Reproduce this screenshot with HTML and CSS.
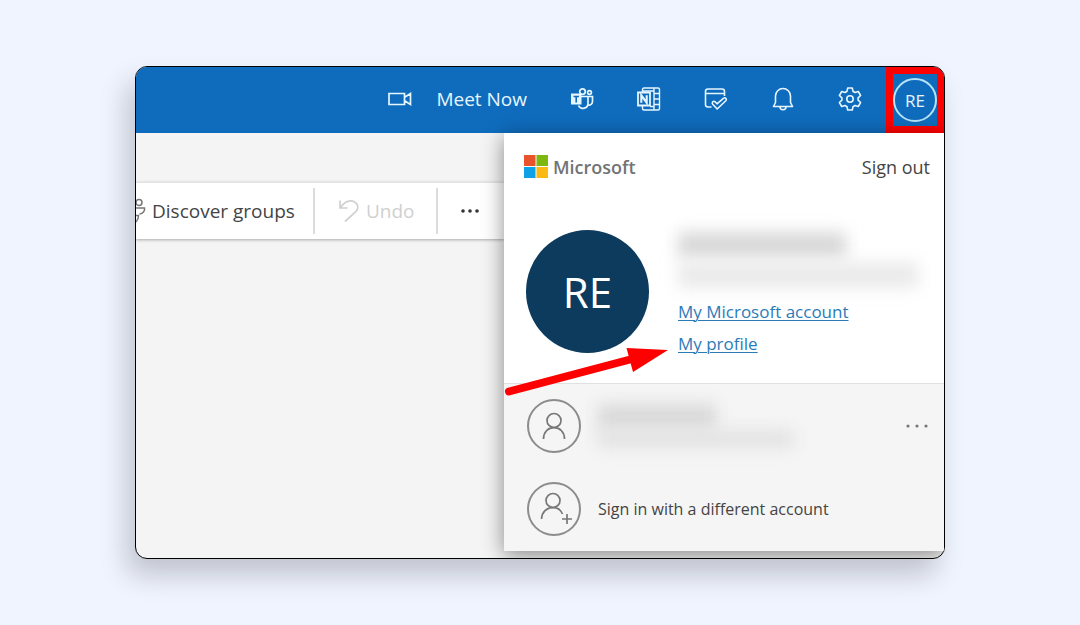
FILE: index.html
```html
<!DOCTYPE html>
<html lang="en">
<head>
	<meta charset="utf-8">
	<meta name="viewport" content="width=device-width, initial-scale=1">
	<title>Outlook - My profile</title>
	<link rel="stylesheet" href="styles.css">
</head>
<body>

	<div class="window">
		<header class="topbar">
			<button class="meet">
				<svg width="24" height="14" viewBox="0 0 24 14" fill="none" stroke="currentColor" stroke-width="1.7">
					<path d="M1 1.500h15.500v11H1zM17 5l5.500-3.500v11L17 9"/>
				</svg>
				Meet Now
			</button>
			<button class="icon-btn" aria-label="Teams">
				<svg width="24" height="24" viewBox="0 0 24 24" fill="none" stroke="currentColor" stroke-width="1.700">
					<circle cx="12.500" cy="4.600" r="2.800"/>
					<circle cx="19.500" cy="5.500" r="1.900"/>
					<path d="M11 9.500h7v6.500a5 5 0 0 1-9.500 2.500M18 9.500h4.500v5a3.500 3.500 0 0 1-4.500 3.400"/>
					<path d="M1 6.500h10.500v11H1z" fill="currentColor" stroke="none"/>
					<path d="M3.500 9.500H9M6.200 9.500v6" stroke="#0f6cbd" stroke-width="1.600"/>
				</svg>
			</button>
			<button class="icon-btn" aria-label="OneNote">
				<svg width="24" height="24" viewBox="0 0 24 24" fill="none" stroke="currentColor" stroke-width="1.400">
					<path d="M5.500 5V2.500q0-1.500 1.500-1.500h14q1.500 0 1.500 1.500v19q0 1.500-1.500 1.500H7q-1.500 0-1.500-1.500V19M17 1v22M17 6.500h5.500M17 12h5.500M17 17.500h5.500M5.500 4H17M13 19.500h4"/>
					<path d="M1 5.500h12v13H1z" stroke-width="1.800"/>
					<path d="M4.300 15.800V8.300l5.400 7.400V8.300" stroke-width="2.100"/>
				</svg>
			</button>
			<button class="icon-btn" aria-label="My Day">
				<svg width="24" height="24" viewBox="0 0 24 24" fill="none" stroke="currentColor" stroke-width="1.600" stroke-linejoin="round">
					<path d="M7.500 20H4q-2.500 0-2.500-2.500V4.500Q1.500 2 4 2h14q2.500 0 2.500 2.500V9M1.500 6.500h19"/>
					<path d="M8.700 17.200a1.700 1.700 0 0 1 2.400-2.400l1.900 2 6.700-5.700a1.700 1.700 0 0 1 2.300 2.400L13.200 22z"/>
				</svg>
			</button>
			<button class="icon-btn" aria-label="Notifications">
				<svg width="24" height="24" viewBox="0 0 24 24" fill="none" stroke="currentColor" stroke-width="1.600" stroke-linejoin="round">
					<path d="M4.500 9a7.500 7.500 0 0 1 15 0v6.500l2 4h-19l2-4z"/>
					<path d="M9 19.800a3 3 0 0 0 6 0"/>
				</svg>
			</button>
			<button class="icon-btn" aria-label="Settings">
				<svg width="24" height="24" viewBox="0 0 24 24" fill="none" stroke="currentColor" stroke-width="1.600" stroke-linejoin="round">
					<path d="M9.700 1h4.600l.7 3.300 2 1.200 3.300-1 2.300 4-2.500 2.300v2.400l2.500 2.300-2.300 4-3.300-1-2 1.200-.7 3.300H9.700L9 19.700l-2-1.200-3.300 1-2.300-4 2.500-2.300v-2.400L1.400 8.500l2.300-4 3.300 1 2-1.200z"/>
					<circle cx="12" cy="12" r="3.200"/>
				</svg>
			</button>
			<div class="highlight">
				<button class="me">RE</button>
			</div>
		</header>

		<div class="content">
			<main class="mail">
				<div class="toolbar">
					<button class="tool discover">
						<svg width="10" height="26" viewBox="0 0 10 26" fill="none" stroke="#777" stroke-width="1.500">
							<circle cx="3" cy="4.500" r="3"/>
							<path d="M0 10h8.500c.5 3-1.500 5.500-5 6M0 17.500h2.500c0 3-1 5-2.500 6.500"/>
						</svg>
						Discover groups
					</button>
					<button class="tool undo" disabled>
						<svg width="20" height="24" viewBox="0 0 20 24" fill="none" stroke="currentColor" stroke-width="1.700">
							<path d="M1 1.500v7.500h7.500M1.500 8.500C5 3.500 10 .5 15 2.500c4 2 5 6.500 2 10L6 22.500"/>
						</svg>
						Undo
					</button>
					<button class="tool more" aria-label="More options">
						<svg width="20" height="4" viewBox="0 0 20 4" fill="#333">
							<circle cx="3" cy="2" r="1.800"/>
							<circle cx="10" cy="2" r="1.800"/>
							<circle cx="17" cy="2" r="1.800"/>
						</svg>
					</button>
				</div>
			</main>

			<aside class="account">
				<div class="brand-row">
					<svg width="24" height="23" viewBox="0 0 25 24">
						<path d="M0 0h12v11.500H0z" fill="#e8532c"/>
						<path d="M13 0h12v11.500H13z" fill="#7db810"/>
						<path d="M0 12.500h12V24H0z" fill="#0fa1e6"/>
						<path d="M13 12.500h12V24H13z" fill="#fbb914"/>
					</svg>
					<span class="brand">Microsoft</span>
					<a class="sign-out" href="#">Sign out</a>
				</div>
				<div class="profile">
					<div class="avatar">RE</div>
					<div class="details">
						<div class="hidden-name"></div>
						<div class="hidden-mail"></div>
						<a href="#">My Microsoft account</a>
						<a href="#">My profile</a>
					</div>
				</div>
				<div class="others">
					<div class="other">
						<span class="person">
							<svg width="28" height="28" viewBox="0 0 28 28" fill="none" stroke="#777" stroke-width="1.700">
								<circle cx="14" cy="8.500" r="7"/>
								<path d="M3.500 27c0-7 4.500-11.300 10.500-11.300S24.500 20 24.500 27"/>
							</svg>
						</span>
						<div class="hidden-user">
							<div class="hidden-line"></div>
							<div class="hidden-line long"></div>
						</div>
						<button class="dots" aria-label="Account options">
							<svg width="22" height="4" viewBox="0 0 22 4" fill="#777">
								<circle cx="2" cy="2" r="1.600"/>
								<circle cx="11" cy="2" r="1.600"/>
								<circle cx="20" cy="2" r="1.600"/>
							</svg>
						</button>
					</div>
					<a class="other" href="#">
						<span class="person">
							<svg width="36" height="34" viewBox="0 0 36 34" fill="none" stroke="#777" stroke-width="1.700">
								<circle cx="17" cy="8.500" r="7"/>
								<path d="M5.500 27c.5-7 5-11.300 11.500-11.300 4.500 0 8 2.300 9.500 6.300M31 22v10M26 27h10"/>
							</svg>
						</span>
						Sign in with a different account
					</a>
				</div>
				<svg class="arrow" width="164" height="52" viewBox="0 0 164 52">
					<path d="M5 45.500L128 13" stroke="#fe0000" stroke-width="8" stroke-linecap="round"/>
					<path d="M122.500 2L164 4l-35 22z" fill="#fe0000"/>
				</svg>
			</aside>
		</div>
	</div>

</body>
</html>
```
FILE: styles.css
```css
* {
	box-sizing: border-box;
}
body {
	margin: 0;
	padding: 66px 0;
	background: #f0f4ff;
	font-family: "Open Sans", "Noto Sans", sans-serif;
	font-size: 17px;
	color: #444;
}
button {
	background: none;
	border: none;
	padding: 0;
	font: inherit;
	color: inherit;
	cursor: pointer;
}
svg {
	flex: none;
}
.window {
	width: 75%;
	margin: auto;
	border: 1px solid #000;
	border-radius: 12px;
	overflow: hidden;
	background: #f4f4f4;
	box-shadow: -8px 16px 28px rgba(0, 0, 0, 0.2);
}
.topbar {
	display: flex;
	justify-content: flex-end;
	align-items: center;
	height: 66px;
	background: #0f6cbd;
	color: #e6f6ff;
}
.meet {
	display: flex;
	align-items: center;
	gap: 24px;
	margin-right: 21px;
	padding-bottom: 3px;
	font-size: 19px;
}
.icon-btn {
	display: flex;
	justify-content: center;
	width: 67px;
	padding-bottom: 2px;
}
.highlight {
	display: flex;
	align-items: center;
	height: 66px;
	margin-left: 3px;
	border: 7px solid #fe0000;
}
.me {
	width: 44px;
	height: 44px;
	border: 2px solid #b5e3f8;
	border-radius: 50%;
	font-size: 17px;
}
.content {
	display: flex;
}
.mail {
	flex: 1;
	min-width: 0;
	padding-top: 49px;
}
.toolbar {
	display: flex;
	align-items: center;
	height: 57px;
	background: #fff;
	border-top: 1px solid #e4e4e4;
	box-shadow: 0 1px 3px rgba(0, 0, 0, 0.3);
	font-size: 19px;
}
.tool {
	display: flex;
	align-items: center;
	height: 46px;
	border-right: 2px solid #dcdcdc;
}
.discover {
	gap: 6px;
	padding-right: 18px;
}
.undo {
	gap: 7px;
	padding: 0 22px 0 24px;
	color: #d0d0d0;
}
.more {
	padding-left: 22px;
	border: none;
}
.account {
	position: relative;
	width: 440px;
	margin-bottom: 7px;
	background: #fff;
	box-shadow: 0 4px 20px rgba(0, 0, 0, 0.45);
}
.brand-row {
	display: flex;
	align-items: center;
	gap: 5px;
	height: 67px;
	padding: 0 14px 0 20px;
}
.brand {
	flex: 1;
	font-size: 18px;
	font-weight: 600;
	color: #737373;
}
.sign-out {
	font-size: 18px;
	color: #444;
	text-decoration: none;
}
.profile {
	display: flex;
	gap: 29px;
	height: 183px;
	padding: 30px 14px 0 22px;
}
.avatar {
	display: flex;
	align-items: center;
	justify-content: center;
	width: 123px;
	height: 123px;
	border-radius: 50%;
	background: #0c3b5e;
	color: #fff;
	font-size: 42px;
}
.details {
	display: flex;
	flex-direction: column;
	align-items: flex-start;
	flex: 1;
}
.details a {
	line-height: 32px;
	color: #2b7bb9;
	text-underline-offset: 2px;
	text-decoration-thickness: 1px;
}
.hidden-name,
.hidden-mail,
.hidden-line {
	filter: blur(8px);
}
.hidden-name {
	width: 168px;
	height: 26px;
	margin-top: 2px;
	background: #d8d8d8;
}
.hidden-mail {
	width: 240px;
	height: 26px;
	margin: 4px 0 8px;
	background: #eaeaea;
}
.others {
	display: flex;
	flex-direction: column;
	gap: 29px;
	padding: 15px 14px 15px 23px;
	background: #f5f5f5;
	border-top: 1px solid #e0e0e0;
}
.other {
	display: flex;
	align-items: center;
	gap: 17px;
	font-size: 16px;
	color: #444;
	text-decoration: none;
}
.person {
	display: flex;
	align-items: center;
	justify-content: center;
	width: 54px;
	height: 54px;
	border: 2px solid #8c8c8c;
	border-radius: 50%;
}
.hidden-user {
	flex: 1;
}
.hidden-line {
	width: 118px;
	height: 26px;
	background: #d9d9d9;
}
.long {
	width: 196px;
	height: 18px;
	background: #e2e2e2;
}
.dots {
	display: flex;
	padding: 4px 2px;
}
.arrow {
	position: absolute;
	left: 0;
	top: 213px;
}
```
